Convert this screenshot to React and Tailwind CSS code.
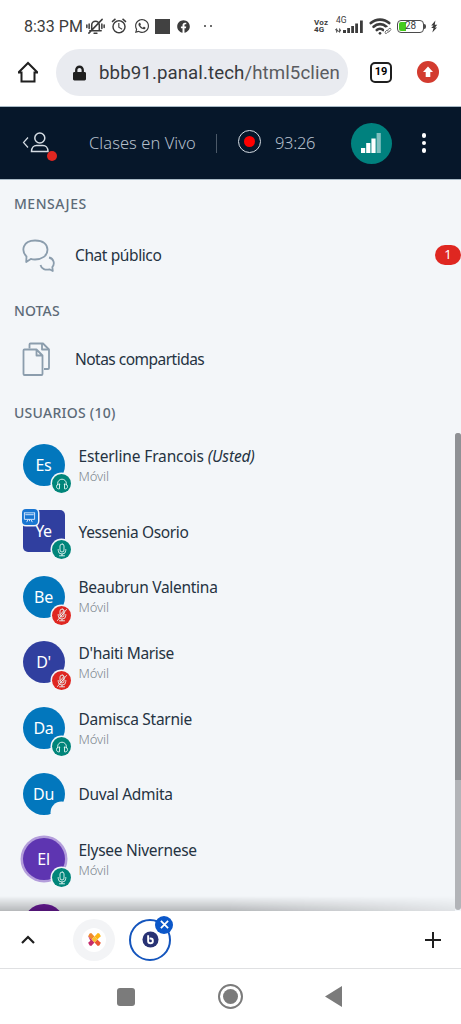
import { FaLock, FaWhatsapp, FaFacebook } from 'react-icons/fa'
import { MdOutlineAlarm } from 'react-icons/md'
import { Wifi } from 'lucide-react'

const users = [
  { name: 'Esterline Francois', initials: 'Es', color: 'bg-[#0277bd]', badge: 'listen', mobile: true, you: true, width: 'tracking-[-0.140px]' },
  { name: 'Yessenia Osorio', initials: 'Ye', color: 'bg-[#303f9f]', badge: 'mic', presenter: true, width: 'tracking-[-0.360px]' },
  { name: 'Beaubrun Valentina', initials: 'Be', color: 'bg-[#0277bd]', badge: 'muted', mobile: true, width: 'tracking-[-0.280px]' },
  { name: "D'haiti Marise", initials: "D'", color: 'bg-[#303f9f]', badge: 'muted', mobile: true, width: 'tracking-[-0.320px]' },
  { name: 'Damisca Starnie', initials: 'Da', color: 'bg-[#0277bd]', badge: 'listen', mobile: true, width: 'tracking-[-0.280px]' },
  { name: 'Duval Admita', initials: 'Du', color: 'bg-[#0277bd]', badge: 'none', width: 'tracking-[-0.300px]' },
  { name: 'Elysee Nivernese', initials: 'El', color: 'bg-[#5e35b1]', badge: 'mic', mobile: true, talking: true, width: 'tracking-[-0.280px]' },
  { name: '', initials: '', color: 'bg-[#6a1b9a]' },
]

const badgeColors = {
  listen: 'bg-[#00857a]',
  mic: 'bg-[#00857a]',
  muted: 'bg-[#df2721]',
  none: 'bg-[#f3f6f9]',
}

function BadgeIcon({ type }) {
  if (type === 'none') return null
  return (
    <svg viewBox="0 0 14 14" className="h-[14px] w-[14px]" fill="none" stroke="#e5f5f3" strokeWidth="0.9" strokeLinecap="round">
      {type === 'listen' ? (
        <>
          <path d="M2.6 8V6.6a4.4 4.4 0 0 1 8.8 0V8" />
          <path d="M4.5 7.2v4.6c-1.6.4-3-.5-3-2.3s1.4-2.7 3-2.3zM9.5 7.2v4.6c1.6.4 3-.5 3-2.3s-1.4-2.7-3-2.3z" />
        </>
      ) : (
        <>
          <rect x="5" y="1" width="4" height="8" rx="2" />
          <path d="M3.2 6.5v.8a3.8 3.8 0 0 0 7.6 0v-.8M7 11.1v1.5M4.5 12.8h5" />
          {type === 'muted' && <path d="M11.5 1.5L2.5 12.5M5 7l3.8-4.5M5.5 8.8L9 4.800" />}
        </>
      )}
    </svg>
  )
}

function Avatar({ user }) {
  return (
    <div className={`relative flex h-[42px] w-[42px] shrink-0 items-center justify-center text-[16px] tracking-[-0.3px] text-white ${user.color} ${user.presenter ? 'rounded-[5px]' : 'rounded-full'} ${user.talking ? 'ring-[2.5px] ring-[#b39ddb]' : ''}`}>
      {user.initials}
      {user.presenter && (
        <span className="absolute -top-[1px] -left-[1px] flex h-[16px] w-[16px] items-center justify-center rounded-[4px] bg-[#1976d2] ring-[1.5px] ring-[#f3f6f9]">
          <svg viewBox="0 0 14 14" className="h-[13px] w-[13px]" fill="none" stroke="#dcecff" strokeWidth="1">
            <path d="M1 2h12M1.5 2v7h11V2M2.5 4h9M5.5 9L4 12M8.5 9l1.5 3M7 9v2" />
          </svg>
        </span>
      )}
      {user.badge && (
        <span className={`absolute -right-[6.5px] -bottom-[7px] flex h-[19px] w-[19px] items-center justify-center rounded-full ring-[1.5px] ring-[#f3f6f9] ${badgeColors[user.badge]}`}>
          <BadgeIcon type={user.badge} />
        </span>
      )}
    </div>
  )
}

function UserRow({ user }) {
  return (
    <div className="flex h-[65.7px] shrink-0 items-center gap-[14px] pl-[22.5px]">
      <Avatar user={user} />
      <div className="flex flex-col pt-[1px]">
        <p className={`text-[15.5px] leading-5 whitespace-nowrap text-[#253342] ${user.width}`}>
          {user.name} {user.you && <i>(Usted)</i>}
        </p>
        {user.mobile && <p className="text-[13px] leading-5 font-light tracking-[-0.1px] text-[#7d868e]">Móvil</p>}
      </div>
    </div>
  )
}

function SignalBars() {
  return (
    <svg viewBox="0 0 30 16" className="h-[16px] w-[30px]" fill="#3c3c3c">
      <path d="M1.6 14.500v-4l-1.200 1.500h2.400zM4.600 10.500v4l-1.200-1.500h2.400z" stroke="#3c3c3c" strokeWidth=".6" />
      <rect x="8" y="12" width="3" height="3" />
      <rect x="12.200" y="10" width="2.800" height="5" />
      <rect x="16.200" y="8" width="2.800" height="7" />
      <rect x="20.200" y="5.500" width="2.800" height="9.500" />
      <rect x="25" y="2.500" width="2.800" height="12.500" />
    </svg>
  )
}

function StatusBar() {
  return (
    <div className="flex h-[49px] items-start pt-[14px] pl-[24px] font-['Roboto',sans-serif] text-[#3c3c3c]">
      <span className="w-[62px] text-[16px] leading-[25px] whitespace-nowrap">8:33 PM</span>
      <div className="flex h-6 items-center">
        <svg viewBox="0 0 20 20" className="h-[19px] w-[19px]" fill="none" stroke="#3c3c3c" strokeWidth="1.6" strokeLinecap="round">
          <path d="M4 14.500h12M6 14V8.500a4 4 0 0 1 8 0V14M8.500 17.200h3M3 17L17 2.500M3.300 7.500v4.500M.9 8.500v2.500M16.700 7.500v4.500M19.100 8.500v2.500" />
        </svg>
        <MdOutlineAlarm className="ml-[5px] h-[18px] w-[18px]" />
        <FaWhatsapp className="ml-[6px] h-[16px] w-[16px]" />
        <span className="ml-[5px] h-[15px] w-[15px] bg-[#414141]" />
        <FaFacebook className="ml-[7px] h-[13px] w-[13px]" />
        <span className="ml-[14px] h-[2px] w-[2px] rounded-full bg-[#3c3c3c]" />
        <span className="ml-[4px] h-[2px] w-[2px] rounded-full bg-[#3c3c3c]" />
      </div>
      <div className="mr-[23px] ml-auto flex h-6 items-center">
        <span className="w-[20px] text-[8px] leading-[7.5px] font-bold tracking-[0.2px]">Voz<br />4G</span>
        <div className="relative ml-[1px] flex h-[24px] w-[30px] items-end pb-[4px]">
          <span className="absolute top-[1px] left-[1px] text-[8.5px] leading-[10px]">4G</span>
          <SignalBars />
        </div>
        <div className="relative ml-[4px]">
          <Wifi className="h-[22px] w-[22px]" strokeWidth={2.900} />
          <svg viewBox="0 0 8 8" className="absolute -right-[1px] bottom-[2px] h-[8px] w-[8px] rounded-full bg-white" fill="none" stroke="#777" strokeWidth="1">
            <path d="M3 4L5 1.500q2-1 2 1L4.500 5.500M5 3.500L2.500 6.500q-2 .5-1.500-1.500L3 3" />
          </svg>
        </div>
        <span className="relative ml-[6px] flex h-[13px] w-[27px] items-center justify-center overflow-hidden rounded-[4px] border-[1.5px] border-[#4b4b4b] text-[10px] leading-none">
          <span className="absolute inset-y-[1px] left-[1px] w-[7px] rounded-l-[2px] bg-[#45cb1d]" />
          <span className="relative">28</span>
        </span>
        <span className="h-[5px] w-[2px] rounded-r bg-[#4b4b4b]" />
        <svg viewBox="0 0 8 14" className="ml-[4px] h-[13px] w-[8px]" fill="#3c3c3c">
          <path d="M5.500 0.500L1 6h2.500L1 8.500h2.500L2.200 13.500L7.200 8.200H5L7.500 5H4.800z" />
        </svg>
      </div>
    </div>
  )
}

function UrlBar() {
  return (
    <div className="flex h-[57px] items-start font-['Roboto',sans-serif]">
      <svg viewBox="0 0 22 22" className="mt-[12px] ml-[17px] h-[22px] w-[22px]" fill="none" stroke="#1f1f1f" strokeWidth="2">
        <path d="M1.500 11.500L11 2l9.500 9.500M1 11.500h3.500V20.500h13V11.500H21" />
      </svg>
      <div className="ml-[17px] flex h-[47px] w-[292px] items-center rounded-full bg-[#e9ebf0] pl-[17px]">
        <FaLock className="h-[16px] w-[13px] text-[#1f1f1f]" />
        <span className="ml-[13px] pt-[2px] text-[18.7px] tracking-[0.08px] whitespace-nowrap text-[#37393d]">
          bbb91.panal.tech<span className="text-[#5a5c61]">/html5clien</span>
        </span>
      </div>
      <span className="mt-[13px] ml-[22px] flex h-[21px] w-[22px] items-center justify-center rounded-[5px] border-2 border-[#1f1f1f] text-[11px] font-bold">19</span>
      <svg viewBox="0 0 22 22" className="mt-[12px] ml-[25px] h-[22px] w-[22px]">
        <circle cx="11" cy="11" r="11" fill="#d33b2f" />
        <path d="M11 5.500L16 11h-2.700v5H8.700v-5H6z" fill="#fff" />
      </svg>
    </div>
  )
}

function MeetingBar() {
  return (
    <div className="flex h-[74px] items-center border-y border-[#a9bac6] bg-[#06172a] text-[#b4bfca]">
      <div className="relative ml-[22px] h-[30px] w-[36px]">
        <svg viewBox="0 0 36 30" className="h-[30px] w-[36px]" fill="none" stroke="#d5dce3" strokeWidth="1.5">
          <path d="M6 9.500L1.500 14.500L6 19.500" strokeWidth="1.200" />
          <circle cx="17.800" cy="10" r="5" />
          <path d="M9.500 23.500c0-4 2.500-6 5-6h6.500c2.500 0 5 2 5 6z" />
        </svg>
        <span className="absolute right-[1px] bottom-[-3px] h-[10px] w-[10px] rounded-full bg-[#df2721]" />
      </div>
      <span className="ml-[31px] w-[107px] text-[16.5px] font-light tracking-[0.06px] whitespace-nowrap">Clases en Vivo</span>
      <span className="ml-[20px] h-[19px] w-px bg-[#4b5968]" />
      <span className="mb-[3px] ml-[21px] flex h-[23px] w-[23px] items-center justify-center rounded-full border-[1.5px] border-[#d5dce3]">
        <span className="h-[11px] w-[11px] rounded-full bg-[#f00]" />
      </span>
      <span className="ml-[14px] w-[41px] text-[16.5px] font-light tracking-[-0.3px]">93:26</span>
      <span className="ml-[34.5px] flex h-[41px] w-[41px] items-center justify-center rounded-full bg-[#00817e]">
        <svg viewBox="0 0 20 20" className="h-[20px] w-[20px]" fill="#fff">
          <rect x="0" y="15" width="4.200" height="5" />
          <rect x="5.200" y="10" width="4.200" height="10" />
          <rect x="10.400" y="5.500" width="4.200" height="14.500" />
          <rect x="15.600" y="0" width="4.200" height="20" opacity=".5" />
        </svg>
      </span>
      <span className="ml-[30px] flex flex-col gap-[3px]">
        <span className="h-[4.5px] w-[4.5px] rounded-full bg-white" />
        <span className="h-[4.5px] w-[4.5px] rounded-full bg-white" />
        <span className="h-[4.5px] w-[4.5px] rounded-full bg-white" />
      </span>
    </div>
  )
}

function BottomTabs() {
  return (
    <div className="relative flex h-[58px] items-center border-b border-[#dfe0e2] bg-white">
      <svg viewBox="0 0 14 10" className="ml-[21px] h-[10px] w-[14px]" fill="none" stroke="#1f1f1f" strokeWidth="2.200">
        <path d="M1 8l6-6 6 6" />
      </svg>
      <span className="ml-[38px] flex h-[42px] w-[42px] items-center justify-center rounded-full bg-[#f3f4f6]">
        <span className="flex h-[24px] w-[24px] items-center justify-center rounded-full bg-white">
          <svg viewBox="0 0 16 16" className="h-[15px] w-[15px]">
            <path d="M4.500 1L8 4.800L5 8L1 4.200q1-.2 1.200-1.500T4.500 1z" fill="#f08a2c" />
            <path d="M11.500 1L8 4.800L11 8l4-3.800q-1-.2-1.200-1.500T11.500 1z" fill="#fdb515" />
            <path d="M4.500 15L8 11.200L5 8l-4 3.800q1 .2 1.200 1.500T4.500 15z" fill="#c42a6b" />
            <path d="M11.500 15L8 11.200L11 8l4 3.800q-1 .2-1.200 1.500T11.500 15z" fill="#ea5530" />
            <path d="M8 4.800L11 8l-3 3.200L5 8z" fill="#fbc02d" />
            <path d="M1 4.200L5 8L3.500 9.500L2.500 7z" fill="#c42a6b" />
          </svg>
        </span>
      </span>
      <span className="relative ml-[14px] flex h-[42px] w-[42px] items-center justify-center rounded-full border-[2.5px] border-[#1455bd]">
        <svg viewBox="0 0 18 18" className="h-[17px] w-[17px]">
          <circle cx="9" cy="9" r="8.500" fill="#283274" />
          <path d="M6.500 4.500V10.500a2.500 2.500 0 1 0 2.500-2.500H8" fill="none" stroke="#fff" strokeWidth="2" />
        </svg>
        <span className="absolute -top-[5px] -right-[4px] flex h-[18px] w-[18px] items-center justify-center rounded-full bg-[#0b57c9]">
          <svg viewBox="0 0 10 10" className="h-[9px] w-[9px]" stroke="#fff" strokeWidth="2">
            <path d="M1 1l8 8M9 1L1 9" />
          </svg>
        </span>
      </span>
      <svg viewBox="0 0 18 18" className="mr-[19px] ml-auto h-[18px] w-[18px]" stroke="#1f1f1f" strokeWidth="2">
        <path d="M9 1v16M1 9h16" />
      </svg>
    </div>
  )
}

export default function App() {
  return (
    <div className="flex h-[1024px] w-[461px] flex-col overflow-hidden bg-white font-['Noto_Sans',sans-serif]">
      <StatusBar />
      <UrlBar />
      <MeetingBar />
      <div className="relative flex h-[731px] flex-col overflow-hidden bg-[#f3f6f9]">
        <h2 className="flex h-[47px] shrink-0 items-center pl-[14px] text-[14px] font-medium tracking-[0.5px] text-[#5d6b78]">MENSAJES</h2>
        <div className="flex h-[56px] shrink-0 items-center pl-[22px]">
          <svg viewBox="0 0 33 34" className="h-[34px] w-[33px]" fill="none" stroke="#8b9dad" strokeWidth="1.8" strokeLinejoin="round">
            <path d="M4.500 18.500C-1 13 .5 2.500 13 2.500c8.500 0 12.500 4 12.500 9.300 0 6-5.500 9.700-12.500 9.700-1.500 0-3-.2-4.200-.6L4.200 24z" />
            <path d="M27 19.500c5 1 6 6.500 3.300 9.500l.5 4-3.300-1.700c-4 1.200-8-.3-9-4.300" />
          </svg>
          <span className="ml-[20px] pt-[1px] text-[15.5px] tracking-[-0.4px] text-[#253342]">Chat público</span>
          <span className="ml-auto flex h-[20px] w-[26px] items-center justify-center rounded-full bg-[#df2721] text-[13px] text-white">1</span>
        </div>
        <h2 className="flex h-[54px] shrink-0 items-center pl-[14px] text-[14px] font-medium tracking-[0.1px] text-[#5d6b78]">NOTAS</h2>
        <div className="flex h-[44px] shrink-0 items-center pl-[22px]">
          <svg viewBox="0 0 29 34" className="h-[34px] w-[29px]" fill="none" stroke="#8b9dad" strokeWidth="1.8" strokeLinejoin="round">
            <path d="M7.500 6.500V2.500q0-1 1-1H21l6 6V26q0 1-1 1h-4" />
            <path d="M20 1.500v6h7M2.500 7.500H14.500l6 6V32q0 1-1 1H2.500q-1 0-1-1V8.500q0-1 1-1zM14.500 7.500v6h6" />
          </svg>
          <span className="ml-[24px] pt-[1px] text-[15.5px] tracking-[-0.52px] text-[#253342]">Notas compartidas</span>
        </div>
        <h2 className="flex h-[51.5px] shrink-0 items-center pt-[11px] pl-[14px] text-[14px] font-medium tracking-[0.25px] text-[#5d6b78]">USUARIOS (10)</h2>
        {users.map((user, i) => <UserRow key={i} user={user} />)}
        <span className="absolute top-[253px] right-0 h-[477px] w-[6px] overflow-hidden rounded-full bg-[#b2b4b8]">
          <span className="block h-[347px] bg-[#8f9195]" />
        </span>
        <span className="absolute bottom-0 left-0 h-[15px] w-[455px] bg-linear-to-t from-black/25 to-transparent [mask-image:linear-gradient(to_right,#000_50%,rgb(0_0_0/0.3))]" />
      </div>
      <BottomTabs />
      <div className="flex h-[55px] items-center bg-white">
        <span className="ml-[117px] h-[18px] w-[18px] rounded-[3px] bg-[#7b7b7b]" />
        <span className="ml-[83px] flex h-[25px] w-[25px] items-center justify-center rounded-full border-2 border-[#7b7b7b]">
          <span className="h-[15px] w-[15px] rounded-full bg-[#7b7b7b]" />
        </span>
        <svg viewBox="0 0 17 21" className="ml-[82px] h-[21px] w-[17px]">
          <path d="M0 10.500L17 0v21z" fill="#7b7b7b" />
        </svg>
      </div>
    </div>
  )
}
